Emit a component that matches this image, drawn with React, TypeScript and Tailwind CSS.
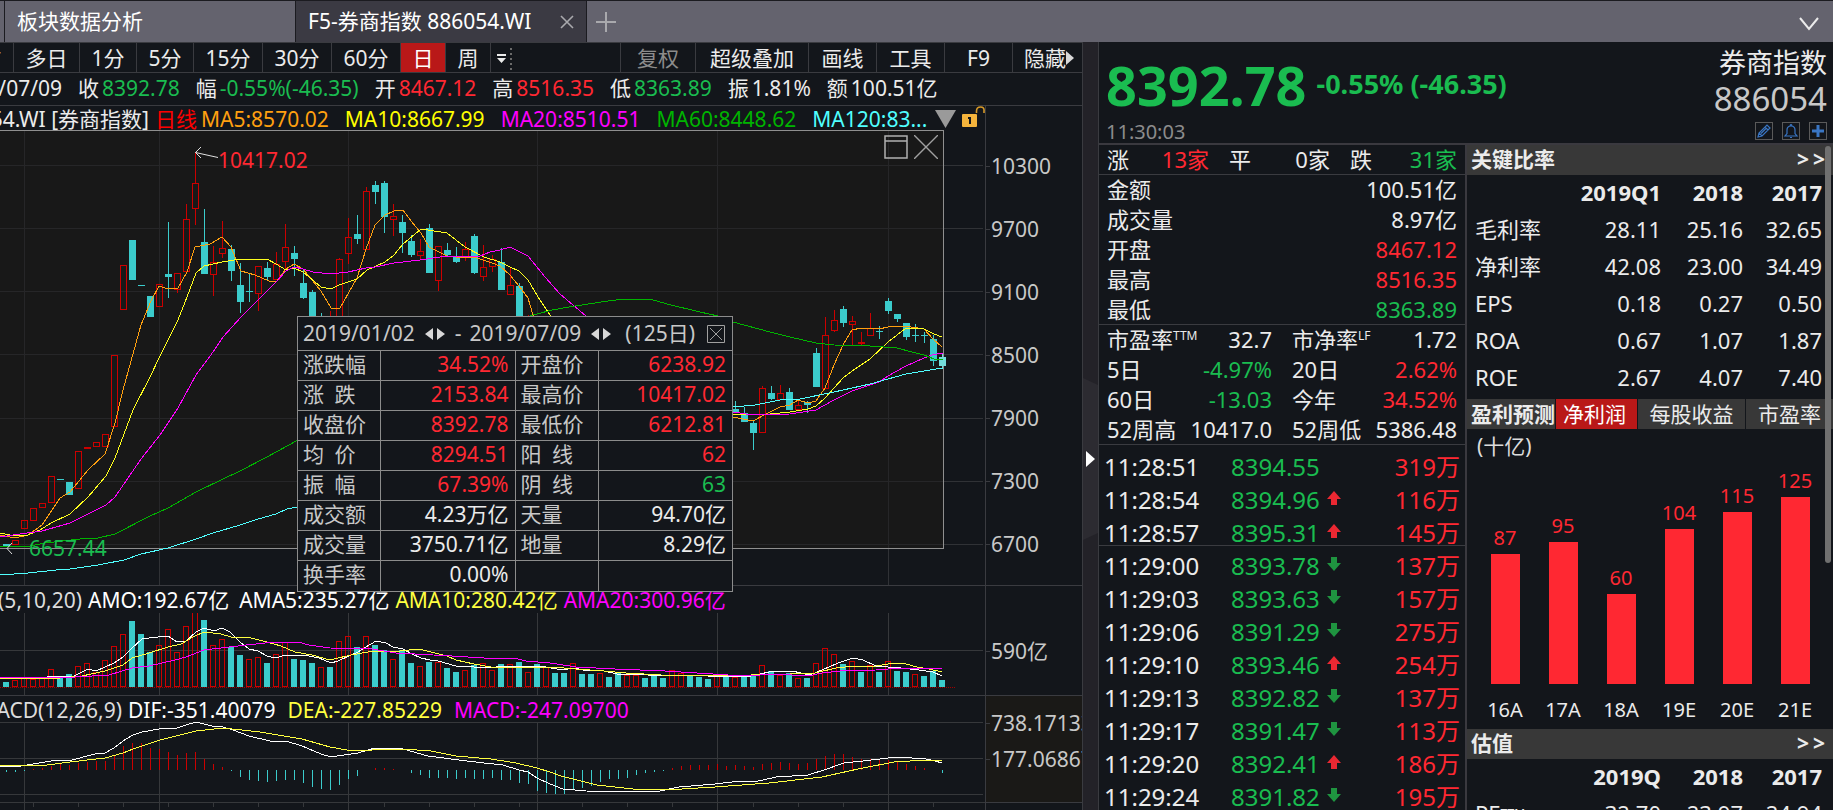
import { useState } from "react";
import type { ReactNode } from "react";

// color tokens
const UP = "#cc0000";
const DOWN = "#3bcccc";

type Candle = [i: number, up: 0 | 1, high: number, top: number, bottom: number, low: number];

const STEP = 9;
const cx = (i: number) => 6.5 + i * STEP;

const CANDLES: Candle[] = [
  [0, 0, 414, 414, 417, 417], [1, 1, 410, 410, 414, 414], [2, 1, 390, 390, 398, 398],
  [3, 1, 378, 378, 390, 390], [4, 1, 373, 373, 377, 377], [5, 1, 346, 346, 372, 372],
  [6, 0, 349, 349, 350, 350], [7, 0, 352, 352, 365, 365], [8, 1, 321, 321, 358, 358],
  [9, 1, 317, 317, 318, 318], [10, 1, 312, 312, 316, 316], [11, 1, 304, 304, 316, 316],
  [12, 1, 225, 225, 296, 296], [13, 1, 135, 135, 179, 179], [14, 0, 110, 110, 150, 150],
  [15, 0, 155, 155, 156, 156], [16, 0, 166, 166, 187, 187], [17, 1, 154, 154, 176, 176],
  [18, 0, 92, 144, 147, 168], [19, 1, 143, 143, 159, 163], [20, 1, 74, 89, 141, 142],
  [21, 1, 22, 53, 78, 95], [22, 0, 79, 112, 144, 144], [23, 1, 116, 132, 144, 166],
  [24, 1, 91, 118, 123, 128], [25, 0, 115, 119, 141, 151], [26, 0, 133, 155, 172, 183],
  [27, 0, 144, 161, 162, 172], [28, 1, 136, 136, 163, 181], [29, 0, 132, 138, 147, 151],
  [30, 1, 122, 134, 149, 150], [31, 1, 94, 117, 131, 140], [32, 0, 116, 123, 129, 146],
  [33, 0, 139, 153, 168, 169], [34, 0, 160, 162, 210, 210], [35, 0, 183, 190, 210, 214],
  [36, 1, 181, 188, 210, 212], [37, 1, 128, 129, 205, 210], [38, 1, 88, 107, 123, 134],
  [39, 0, 85, 104, 109, 114], [40, 1, 57, 61, 119, 120], [41, 0, 51, 55, 62, 74],
  [42, 0, 51, 53, 87, 103], [43, 1, 74, 86, 89, 106], [44, 0, 85, 92, 103, 123],
  [45, 0, 105, 111, 125, 127], [46, 1, 109, 121, 125, 129], [47, 0, 94, 98, 143, 143],
  [48, 1, 116, 116, 150, 161], [49, 0, 113, 120, 125, 127], [50, 0, 117, 127, 132, 133],
  [51, 1, 112, 119, 126, 131], [52, 0, 104, 106, 143, 144], [53, 1, 115, 137, 146, 151],
  [54, 1, 125, 129, 136, 142], [55, 0, 118, 132, 160, 160], [56, 1, 137, 155, 164, 165],
  [57, 0, 153, 156, 200, 205], [58, 1, 185, 190, 210, 214],
  [81, 0, 271, 279, 282, 283], [82, 0, 277, 283, 292, 292], [83, 0, 290, 293, 303, 320],
  [84, 1, 256, 258, 302, 302], [85, 0, 256, 263, 269, 270], [86, 1, 255, 263, 269, 269],
  [87, 0, 258, 262, 280, 280], [88, 1, 269, 275, 279, 280], [89, 0, 271, 272, 275, 283],
  [90, 0, 218, 223, 257, 257], [91, 1, 187, 205, 258, 258], [92, 1, 180, 190, 200, 202],
  [93, 0, 176, 179, 193, 197], [94, 1, 186, 191, 194, 215], [95, 1, 202, 212, 213, 215],
  [96, 1, 183, 198, 205, 206], [97, 0, 196, 201, 202, 209], [98, 0, 168, 171, 181, 184],
  [99, 0, 184, 184, 189, 192], [100, 0, 193, 193, 207, 210], [101, 0, 194, 205, 206, 212],
  [102, 0, 202, 205, 206, 213], [103, 0, 205, 209, 231, 236], [104, 0, 223, 227, 236, 239],
];

// moving averages, split where the range box hides them
const MA_LINES: { color: string; points: string[] }[] = [
  {
    color: "#ffa010",
    points: [
      "0,405 15,408 28,405 42,395 60,368 70,362 88,340 105,324 115,293 123,260 141,195 151,171 159,156 168,159 178,158 187,142 195,117 210,114 222,107 231,117 241,141 255,145 269,151 277,151 286,139 294,134 303,139 321,161 331,178 340,178 357,148 366,119 375,95 385,85 394,81 403,80 411,91 421,103 429,117 447,126 456,127 474,127 492,133 500,136 510,145 519,156 528,168 533,185 536,200",
      "733,287 753,291 768,283 780,277 790,275 798,270 808,273 816,271 825,258 834,235 843,215 852,200 861,198 870,198 879,199 888,197 905,196 924,199 933,209 942,217",
    ],
  },
  {
    color: "#ffff1e",
    points: [
      "0,403 15,406 28,405 40,400 51,393 70,384 88,367 106,346 115,328 133,280 150,247 160,226 178,190 187,167 196,143 204,136 222,132 240,129 267,129 276,134 286,140 294,138 303,142 321,157 331,159 339,155 357,149 367,140 385,132 394,125 403,114 421,99 447,103 465,117 484,127 500,132 510,137 519,141 528,150 540,170 552,188 560,200",
      "733,284 760,285 790,282 808,279 816,276 825,268 843,248 852,241 870,229 888,212 906,198 924,199 934,204 942,207",
    ],
  },
  {
    color: "#ff00ff",
    points: [
      "0,407 20,404 42,401 70,393 88,384 106,375 115,367 141,329 160,305 178,278 196,245 213,222 223,207 241,187 258,170 276,152 286,141 294,137 303,139 313,142 331,144 348,142 366,138 375,137 394,133 420,130 447,126 480,126 490,122 500,120 510,117 528,126 545,147 560,164 586,186 600,200",
      "733,282 753,285 790,284 816,280 834,270 852,261 879,252 888,246 906,236 924,228 932,225 943,223",
    ],
  },
  {
    color: "#00b400",
    points: [
      "0,417 30,416 45,413 80,409 98,408 115,404 150,386 168,378 196,362 223,349 240,341 267,327 298,310",
      "526,187 552,180 575,176 608,171 625,169 650,169 667,174 700,182 718,186 733,192 770,202 790,207 816,213 834,215 870,216 897,218 912,222 924,225 934,229 943,230",
    ],
  },
  {
    color: "#50ffff",
    points: [
      "0,445 28,443 56,440 70,439 98,435 124,430 141,424 168,418 196,409 213,403 240,395 258,389 276,384 287,379 298,377",
      "733,277 755,275 780,270 800,269 834,262 870,254 906,244 930,240 943,238",
    ],
  },
];

const VOLUMES = [
  5, 7, 9, 8, 9, 18, 11, 13, 21, 24, 15, 27, 41, 53, 66, 53, 35, 42, 58, 35, 61, 75, 67, 42, 48, 40,
  32, 28, 30, 24, 33, 45, 28, 27, 24, 20, 20, 46, 51, 40, 51, 42, 37, 28, 37, 24, 21, 25, 25, 19, 15,
  17, 22, 24, 17, 23, 23, 25, 15, 23, 20, 14, 14, 24, 13, 13, 14, 10, 15, 12, 12, 9, 11, 9, 17, 14,
  12, 10, 8, 11, 10, 10, 10, 11, 22, 16, 12, 14, 9, 9, 24, 39, 33, 23, 26, 15, 22, 15, 26, 16, 15,
  13, 11, 16, 7,
];
// u = rising day, d = falling day, ten days per group
const VOLUME_DIR = [
  "duuuuudduu",
  "uuuuddduuu",
  "uuduudduud",
  "uuddduduud",
  "udduddudud",
  "duduududud",
  "uddudduddu",
  "uddduudddu",
  "duddududud",
  "uuududud" + "ud",
  "duddd",
].join("");

const VOLUME_LINES = [
  {
    color: "#ffffff",
    points:
      "0,66 44,65 51,63 74,63 88,56 96,58 105,54 114,50 123,44 132,35 142,26 149,25 168,23 177,29 186,28 196,19 204,15 214,18 222,15 230,19 240,29 249,36 258,38 267,43 275,45 286,42 309,43 319,45 331,50 338,48 351,42 358,39 366,34 376,28 386,30 393,34 403,36 412,41 421,45 430,47 438,48 456,53 491,55 502,53 540,53 563,57 574,55 583,57 604,58 617,61 636,61 660,63 681,62 708,63 751,63 769,59 792,58 810,62 822,57 838,50 853,45 863,47 876,53 888,54 901,55 919,57 933,59 942,63",
  },
  {
    color: "#ffff40",
    points:
      "0,65 49,66 82,63 105,58 123,52 132,45 149,40 168,34 181,31 193,24 204,19 221,21 231,24 247,24 267,29 281,33 295,39 312,42 330,47 351,42 368,39 400,38 419,36 435,40 447,43 456,47 474,51 491,54 551,54 576,56 604,58 626,60 661,62 708,63 751,62 790,61 815,60 836,55 854,53 876,53 894,50 906,51 917,54 929,56 942,59",
  },
  {
    color: "#ff00ff",
    points:
      "0,64 75,64 109,62 132,55 149,53 175,47 186,44 204,37 221,35 246,32 275,29 298,29 309,32 330,35 372,36 396,40 452,43 484,45 514,45 526,48 550,50 576,54 615,56 665,58 697,60 744,63 776,61 808,63 822,60 840,58 876,57 901,55 929,55 942,56",
  },
];

const MACD = [
  -2, -2, -1, 1, 2, 4, 6, 5, 7, 8, 9, 9, 15, 24, 27, 27, 22, 21, 18, 15, 17, 18, 11, 6, 3, -1, -7,
  -10, -11, -12, -11, -10, -10, -13, -17, -19, -20, -15, -9, -6, 0, 2, 2, 1, 0, -3, -5, -8, -8, -8,
  -9, -8, -9, -9, -8, -10, -10, -13, -14, -21, -23, -24, -24, -19, -18, -16, -12, -9, -9, -8, -5, -3,
  -2, -1, 2, 4, 5, 5, 5, 6, 4, 5, 4, 3, 6, 7, 8, 7, 6, 7, 11, 14, 16, 16, 13, 11, 11, 10, 10, 8, 6,
  4, 2, 0, -3,
];

const MACD_LINES = [
  {
    color: "#ffffff",
    points:
      "0,44 21,44 39,41 51,39 72,38 95,32 105,31 114,26 123,19 133,13 142,10 165,6 177,6 186,3 196,0 212,4 223,5 233,8 249,14 270,19 286,19 302,24 321,32 331,35 344,33 358,31 375,26 403,27 428,34 459,38 484,41 503,43 519,48 528,50 537,56 550,62 563,67 586,69 633,70 660,69 679,65 715,62 740,59 754,60 776,55 808,53 824,48 844,41 863,39 897,35 926,37 935,39 942,41",
  },
  {
    color: "#ffff40",
    points:
      "0,43 47,43 70,40 105,36 123,31 133,27 160,18 196,9 223,6 260,10 302,17 330,25 347,28 372,28 403,27 431,29 456,34 491,37 516,41 537,46 550,50 561,54 597,63 633,67 665,68 715,65 769,61 822,55 858,47 894,40 926,38 942,39",
  },
];

const MONTHS = [24.5, 159.5, 348.5, 537.5, 717.5, 888.5];
const WEEKS = [
  33.5, 78.5, 123.5, 168.5, 213.5, 258.5, 303.5, 384.5, 429.5, 474.5, 519.5, 582.5, 627.5, 672.5,
  753.5, 798.5, 843.5, 933.5,
];
const PRICES = [10300, 9700, 9100, 8500, 7900, 7300, 6700];
const PRICE_Y = [35.5, 98.5, 161.5, 224.5, 288.5, 351.5, 414.5];

const RED = "text-[#ff2832]";
const GREEN = "text-[#1abc50]";
const WHITE = "text-[#ebebeb]";

function TabBar() {
  return (
    <header className="flex h-[42px] shrink-0 items-stretch border-t border-[#1b1b20] bg-[#64636e] text-[21px] text-white">
      <button className="ml-1 w-[292px] border-x border-[#1b1b20] px-3 text-left">板块数据分析</button>
      <div className="flex w-[291px] items-center justify-between border-r border-[#1b1b20] bg-[#3b3a43] pr-3 pl-3">
        <button>F5-券商指数 886054.WI</button>
        <button aria-label="关闭" className="text-[#a9a9ad]">
          <svg width="14" height="14" viewBox="0 0 14 14" stroke="currentColor" strokeWidth="1.6">
            <path d="M1 1L13 13M13 1L1 13" />
          </svg>
        </button>
      </div>
      <button aria-label="新建" className="ml-2 text-[#a9a9ad]">
        <svg width="22" height="22" viewBox="0 0 22 22" stroke="currentColor" strokeWidth="2">
          <path d="M11 1V21M1 11H21" />
        </svg>
      </button>
      <button aria-label="更多" className="mt-1 mr-3.5 ml-auto text-[#ebebeb]">
        <svg width="20" height="14" viewBox="0 0 20 14" fill="none" stroke="currentColor" strokeWidth="2">
          <path d="M1 1L10 12L19 1" />
        </svg>
      </button>
    </header>
  );
}

const PERIODS = [
  ["多日", "w-[66px]"],
  ["1分", "w-[57px]"],
  ["5分", "w-[57px]"],
  ["15分", "w-[69px]"],
  ["30分", "w-[69px]"],
  ["60分", "w-[69px]"],
  ["日", "w-[45px]"],
  ["周", "w-[45px]"],
];

function Toolbar() {
  const [period, setPeriod] = useState("日");
  return (
    <nav className="flex h-[31px] shrink-0 overflow-hidden border-y border-[#3a3b40] text-[21px] leading-[28px] text-[#ebebeb]">
      <button className="flex w-[14px] shrink-0 justify-end overflow-hidden border-r border-[#3a3b40] pr-3 whitespace-nowrap">
        分时
      </button>
      {PERIODS.map(([p, w]) => (
        <button
          key={p}
          onClick={() => setPeriod(p)}
          className={`${w} shrink-0 border-r border-[#3a3b40] ${p === period ? "bg-[#b91818] text-white" : ""}`}
        >
          {p}
        </button>
      ))}
      <button aria-label="更多周期" className="ml-1.5 flex items-center">
        <svg width="18" height="24" viewBox="0 0 18 24" fill="#ebebeb">
          <path d="M0 8H9V10H0ZM0 12H9L4.5 17Z" />
          <path d="M14 2V24" stroke="#6b6b6b" strokeWidth="2" strokeDasharray="2 3" />
        </svg>
      </button>
      <div className="ml-auto flex shrink-0 [&>button]:border-l [&>button]:border-[#3a3b40]">
        <button className="w-[75px] text-[#8c8c8c]">复权</button>
        <button className="w-[113px]">超级叠加</button>
        <button className="w-[68px]">画线</button>
        <button className="w-[68px]">工具</button>
        <button className="w-[68px]">F9</button>
        <button className="flex w-[70px] items-center pl-[11px] whitespace-nowrap">
          隐藏
          <svg className="shrink-0" width="8" height="14" viewBox="0 0 8 14" fill="#d8d8d8">
            <path d="M0 0L8 7L0 14Z" />
          </svg>
        </button>
      </div>
    </nav>
  );
}

function SummaryBar() {
  const items = [
    ["收", "8392.78", GREEN],
    ["幅", "-0.55%(-46.35)", GREEN],
    ["开", "8467.12", RED],
    ["高", "8516.35", RED],
    ["低", "8363.89", GREEN],
    ["振", "1.81%", WHITE],
    ["额", "100.51亿", WHITE],
  ];
  return (
    <div className="flex h-[33px] shrink-0 gap-4 overflow-hidden border-b border-[#3a3b40] text-[21px] leading-[30px] whitespace-nowrap text-[#ebebeb]">
      <span className="flex w-[62px] shrink-0 justify-end overflow-hidden">2019/07/09</span>
      {items.map(([k, v, c]) => (
        <span key={k} className="flex gap-[3px]">
          {k}
          <span className={c}>{v}</span>
        </span>
      ))}
    </div>
  );
}

function Bars() {
  return (
    <g shapeRendering="crispEdges">
      {CANDLES.map(([i, up, high, top, bottom, low]) => {
        const x = cx(i);
        if (up) {
          return (
            <g key={i} stroke={UP} fill="none">
              <path d={`M${x} ${high}V${top}M${x} ${bottom}V${low}`} />
              <rect x={x - 3} y={top + 0.5} width={6} height={bottom - top} />
            </g>
          );
        }
        const color = i === 104 ? "#74dcdc" : DOWN;
        return (
          <g key={i} stroke={color} fill={color}>
            <path d={`M${x} ${high}V${low}`} />
            <rect x={x - 3.5} y={top} width={7} height={bottom - top} stroke="none" />
          </g>
        );
      })}
    </g>
  );
}

function PriceChart() {
  return (
    <svg className="block h-[455px] w-full" viewBox="0 0 985 455" preserveAspectRatio="none">
      <g stroke="#303236" shapeRendering="crispEdges">
        {MONTHS.map((x) => (
          <path key={x} d={`M${x} 0V455`} />
        ))}
        {PRICE_Y.map((y) => (
          <path key={y} d={`M944 ${y}H983`} />
        ))}
      </g>
      <rect x="-2" y="0.5" width="945.5" height="418" fill="#181818" stroke="#8f8f8f" shapeRendering="crispEdges" />
      <g stroke="#262628" shapeRendering="crispEdges">
        {MONTHS.map((x) => (
          <path key={x} d={`M${x} 1V418`} />
        ))}
        {PRICE_Y.map((y) => (
          <path key={y} d={`M0 ${y}H943`} />
        ))}
      </g>
      <Bars />
      {MA_LINES.map((l) =>
        l.points.map((p) => (
          <polyline key={p} points={p} fill="none" stroke={l.color} shapeRendering="crispEdges" />
        )),
      )}
      <g stroke="#e0e0e0" fill="none">
        <path d="M218 27.500L195.500 22.500M201 17L195.500 22.500L201 28" />
        <path d="M12 413L7 418.500L12 424" />
      </g>
    </svg>
  );
}

function VolumeChart() {
  return (
    <svg className="block h-[82px] w-full" viewBox="0 0 985 82" preserveAspectRatio="none">
      <g stroke="#36383b" shapeRendering="crispEdges">
        {MONTHS.map((x) => (
          <path key={x} d={`M${x} 0V82`} />
        ))}
        <path d="M0 37.500H983" />
      </g>
      <path d="M0 74.500H955" stroke="#a00000" strokeDasharray="1 1" shapeRendering="crispEdges" />
      <g shapeRendering="crispEdges">
        {VOLUMES.map((h, i) =>
          VOLUME_DIR[i] === "u" ? (
            <rect key={i} x={cx(i) - 3} y={74.5 - h} width={5} height={h - 1} fill="none" stroke={UP} />
          ) : (
            <rect key={i} x={cx(i) - 3.5} y={74 - h} width={6} height={h} fill={DOWN} />
          ),
        )}
      </g>
      {VOLUME_LINES.map((l) => (
        <polyline key={l.color} points={l.points} fill="none" stroke={l.color} shapeRendering="crispEdges" />
      ))}
    </svg>
  );
}

function MacdChart() {
  return (
    <svg className="block h-[88px] w-full" viewBox="0 0 985 88" preserveAspectRatio="none">
      <g stroke="#36383b" shapeRendering="crispEdges">
        {MONTHS.map((x) => (
          <path key={x} d={`M${x} 0V88`} />
        ))}
        <path d="M0 0.500H983M0 36.500H983M0 72.500H983M0 80.500H985" />
        {WEEKS.map((x) => (
          <path key={x} d={`M${x} 81V85`} />
        ))}
      </g>
      <g shapeRendering="crispEdges">
        {MACD.map((v, i) => (
          <path key={i} d={`M${cx(i)} 48V${48 - v}`} stroke={v > 0 ? UP : DOWN} />
        ))}
      </g>
      {MACD_LINES.map((l) => (
        <polyline key={l.color} points={l.points} fill="none" stroke={l.color} shapeRendering="crispEdges" />
      ))}
    </svg>
  );
}

function Stepper() {
  return (
    <button aria-label="调整日期" className="mx-2.5 flex items-center">
      <svg width="20" height="12" viewBox="0 0 20 12" fill="#d8d8d8">
        <path d="M8 0V12L0 6ZM12 0V12L20 6Z" />
      </svg>
    </button>
  );
}

const RANGE_ROWS = [
  ["涨跌幅", "34.52%", RED, "开盘价", "6238.92", RED],
  ["涨\u2002跌", "2153.84", RED, "最高价", "10417.02", RED],
  ["收盘价", "8392.78", RED, "最低价", "6212.81", RED],
  ["均\u2002价", "8294.51", RED, "阳\u2002线", "62", RED],
  ["振\u2002幅", "67.39%", RED, "阴\u2002线", "63", GREEN],
  ["成交额", "4.23万亿", WHITE, "天量", "94.70亿", WHITE],
  ["成交量", "3750.71亿", WHITE, "地量", "8.29亿", WHITE],
  ["换手率", "0.00%", WHITE, "", "", WHITE],
];

// Range statistics, floats over the price pane
function RangeBox() {
  return (
    <div className="absolute top-[210px] left-[297px] w-[436px] border border-[#8c8c8c] bg-[#13161b] text-[21px] text-[#c8c8c8]">
      <div className="flex h-[33px] items-center pr-[7px] pl-[5px] leading-[33px] whitespace-nowrap">
        <span>2019/01/02</span>
        <Stepper />
        <span>-</span>
        <span className="ml-2">2019/07/09</span>
        <Stepper />
        <span className="ml-auto">(125日)</span>
        <button aria-label="关闭" className="ml-3">
          <svg width="18" height="18" viewBox="0 0 18 18" fill="none" stroke="#a0a0a0">
            <path d="M0.500 0.500H17.500V17.500H0.500ZM3 3L15 15M15 3L3 15" />
          </svg>
        </button>
      </div>
      <table className="w-full table-fixed border-collapse">
        <colgroup>
          <col className="w-[82px]" />
          <col className="w-[135px]" />
          <col className="w-[83px]" />
          <col />
        </colgroup>
        <tbody>
          {RANGE_ROWS.map(([k1, v1, c1, k2, v2, c2]) => (
            <tr key={k1} className="border-t border-[#8c8c8c] align-top leading-[27px] whitespace-nowrap">
              <th className="h-[30px] p-0 pl-[5px] text-left font-normal whitespace-pre">{k1}</th>
              <td className={`border-l border-[#8c8c8c] p-0 pr-[6px] text-right ${c1}`}>{v1}</td>
              <th className="border-l border-[#8c8c8c] p-0 pl-[5px] text-left font-normal whitespace-pre">{k2}</th>
              <td className={`border-l border-[#8c8c8c] p-0 pr-[6px] text-right ${c2}`}>{v2}</td>
            </tr>
          ))}
        </tbody>
      </table>
    </div>
  );
}

function Pane({ head, chart, axis, axisClass = "" }: { head: ReactNode; chart: ReactNode; axis: ReactNode; axisClass?: string }) {
  return (
    <div className="flex shrink-0 text-[21px] whitespace-nowrap">
      <div className="min-w-0 flex-1 overflow-hidden">
        {head}
        {chart}
      </div>
      <div className={`w-[97px] shrink-0 overflow-hidden border-l border-[#3a3b40] text-[#c8c8c8] ${axisClass}`}>{axis}</div>
    </div>
  );
}

function Tick({ children }: { children: ReactNode }) {
  return (
    <div className="flex items-center gap-px before:h-px before:w-1 before:shrink-0 before:bg-[#3a3b40]">
      {children}
    </div>
  );
}

function ChartArea() {
  return (
    <div className="relative flex-1">
      <Pane
        head={
          <div className="flex h-6 items-end leading-[22px]">
            <span className="flex w-[149px] shrink-0 justify-end overflow-hidden text-[#ebebeb]">886054.WI [券商指数]</span>
            <span className="ml-1.5 text-[#ff0000]">日线</span>
            <span className="ml-1 text-[#ffa010]">MA5:8570.02</span>
            <span className="ml-4 text-[#ffff00]">MA10:8667.99</span>
            <span className="ml-4 text-[#ff00ff]">MA20:8510.51</span>
            <span className="ml-4 text-[#00b400]">MA60:8448.62</span>
            <span className="ml-4 text-[#50ffff]">MA120:83...</span>
            <button aria-label="展开" className="mb-0.5 ml-auto">
              <svg width="21" height="18" viewBox="0 0 21 18" fill="#9a9a9a">
                <path d="M0 0H21L10.500 18Z" />
              </svg>
            </button>
            <button aria-label="锁定" className="mb-0.5 ml-1.5">
              <svg width="23" height="22" viewBox="0 0 23 22" fill="none">
                <rect x="0" y="8" width="15" height="13" rx="1" fill="#f5b43c" />
                <path d="M6 11H9V18H7V13H6Z" fill="#13161b" />
                <path d="M14.500 7V5Q14.500 1 18.500 1T22 5V7" stroke="#d89a28" strokeWidth="1.6" />
              </svg>
            </button>
          </div>
        }
        chart={<PriceChart />}
        axis={
          <div className="pt-[29px]">
            {PRICES.map((p) => (
              <div key={p} className="leading-[63px]">
                <Tick>{p}</Tick>
              </div>
            ))}
          </div>
        }
      />
      <div className="border-t border-[#3a3b40]">
        <Pane
          head={
            <div className="flex h-[27px] items-end leading-[25px] text-white">
              <span className="flex w-[82px] shrink-0 justify-end overflow-hidden text-[#dcdcdc]">AMO(5,10,20)</span>
              <span className="ml-1.5">AMO:192.67亿</span>
              <span className="ml-2.5">AMA5:235.27亿</span>
              <span className="ml-1.5 text-[#ffff40]">AMA10:280.42亿</span>
              <span className="ml-1.5 text-[#ff00ff]">AMA20:300.96亿</span>
            </div>
          }
          chart={<VolumeChart />}
          axis={
            <div className="pt-12 leading-[34px]">
              <Tick>590亿</Tick>
            </div>
          }
        />
      </div>
      <div className="border-t border-[#3a3b40]">
        <Pane
          head={
            <div className="flex h-[26px] items-end leading-[24px] text-white">
              <span className="flex w-[122px] shrink-0 justify-end overflow-hidden text-[#dcdcdc]">MACD(12,26,9)</span>
              <span className="ml-1.5">DIF:-351.40079</span>
              <span className="ml-3 text-[#ffff40]">DEA:-227.85229</span>
              <span className="ml-3 text-[#ff00ff]">MACD:-247.09700</span>
            </div>
          }
          chart={<MacdChart />}
          axisClass="bg-[#1a1917]"
          axis={
            <div className="pt-[9px] leading-9">
              <Tick>738.17133</Tick>
              <Tick>177.06867</Tick>
              <div className="mt-[25px] h-2 border-t border-[#3a3b40] bg-[#13161b]" />
            </div>
          }
        />
      </div>
      <span className={`absolute top-[39px] left-[218px] text-[21px] leading-[30px] ${RED}`}>10417.02</span>
      <span className={`absolute top-[427px] left-[29px] text-[21px] leading-[30px] ${GREEN}`}>6657.44</span>
      <div className="absolute top-[29px] right-[144px] flex gap-1.5">
        <button aria-label="最大化">
          <svg width="24" height="24" viewBox="0 0 24 24" fill="none" stroke="#b0b0b0" strokeWidth="1.5">
            <path d="M1 1H23V23H1ZM1 6H23" />
          </svg>
        </button>
        <button aria-label="关闭区间">
          <svg width="24" height="24" viewBox="0 0 24 24" fill="none" stroke="#a0a0a0" strokeWidth="1.4">
            <path d="M0 0L24 24M24 0L0 24" />
          </svg>
        </button>
      </div>
      <RangeBox />
    </div>
  );
}

function Collapser() {
  return (
    <button aria-label="收起" className="flex w-[15px] shrink-0 flex-col bg-[#232228] pt-[336px]">
      <svg width="15" height="162" viewBox="0 0 15 162">
        <path d="M0 0L15 7V155L0 162Z" fill="#2c2b31" />
        <path d="M3 73V89L12 81Z" fill="#fff" />
      </svg>
    </button>
  );
}

function QuoteHeader() {
  return (
    <div className="flex h-[103px] shrink-0 justify-between border-b-2 border-[#3a393f] pr-1.5 pl-[7px] whitespace-nowrap">
      <div className="pt-[7px]">
        <div className={`flex gap-2.5 font-bold ${GREEN}`}>
          <span className="text-[54px] leading-[72px]">8392.78</span>
          <span className="text-[27px] leading-[70px]">-0.55% (-46.35)</span>
        </div>
        <div className="pt-px text-[20px] leading-5 text-[#8c8c8c]">11:30:03</div>
      </div>
      <div className="text-right">
        <div className="pt-1 text-[27px] leading-[34px] text-[#ebebeb]">券商指数</div>
        <div className="text-[33px] leading-[38px] text-[#c8c8c8]">886054</div>
        <div className="mt-1 flex justify-end gap-[9px] [&>button]:border [&>button]:border-[#5a5a5a]">
          <button aria-label="编辑">
            <svg width="16" height="16" viewBox="0 0 16 16" fill="none" stroke="#3a76c4" strokeWidth="1.2">
              <path d="M2 14L3 10L11 2L14 5L6 13ZM9 4L12 7M3 10L6 13M5 10.500L10 5.500" />
            </svg>
          </button>
          <button aria-label="预警">
            <svg width="16" height="16" viewBox="0 0 16 16" fill="none" stroke="#3a76c4" strokeWidth="1.2">
              <path d="M2 13H14L12 10.500V7Q12 3 8 3T4 7V10.500ZM7 2.500Q8 0.500 9 2.500M7 14.500H9" />
            </svg>
          </button>
          <button aria-label="添加">
            <svg width="16" height="16" viewBox="0 0 16 16" stroke="#3a76c4" strokeWidth="3">
              <path d="M8 2V14M2 8H14" />
            </svg>
          </button>
        </div>
      </div>
    </div>
  );
}

function Stat({ k, sup, v, c = "" }: { k: string; sup?: string; v: string; c?: string }) {
  return (
    <div className="flex h-[30px] justify-between leading-[28px]">
      <dt>
        {k}
        {sup && <span className="align-[8px] text-[12px] leading-3">{sup}</span>}
      </dt>
      <dd className={c}>{v}</dd>
    </div>
  );
}

const TICKS: [string, string, number, string][] = [
  ["11:28:51", "8394.55", 0, "319万"],
  ["11:28:54", "8394.96", 1, "116万"],
  ["11:28:57", "8395.31", 1, "145万"],
  ["11:29:00", "8393.78", -1, "137万"],
  ["11:29:03", "8393.63", -1, "157万"],
  ["11:29:06", "8391.29", -1, "275万"],
  ["11:29:10", "8393.46", 1, "254万"],
  ["11:29:13", "8392.82", -1, "137万"],
  ["11:29:17", "8391.47", -1, "113万"],
  ["11:29:20", "8392.41", 1, "186万"],
  ["11:29:24", "8391.82", -1, "195万"],
];

function Arrow({ dir }: { dir: number }) {
  if (!dir) return null;
  return (
    <svg className="mb-1" width="14" height="14" viewBox="0 0 14 14" fill={dir > 0 ? "#eb2832" : "#1f9440"}>
      <path d={dir > 0 ? "M7 0L14 8H10V14H4V8H0Z" : "M7 14L14 6H10V0H4V6H0Z"} />
    </svg>
  );
}

function QuoteColumn() {
  return (
    <div className="min-w-0 flex-1 overflow-hidden border-r-2 border-[#3a393f] text-[22px] whitespace-nowrap text-[#ebebeb]">
      <dl className="grid h-[30px] grid-cols-[101fr_100fr_106fr] gap-5 border-b border-[#3a3b40] px-2">
        <Stat k="涨" v="13家" c={RED} />
        <Stat k="平" v="0家" />
        <Stat k="跌" v="31家" c={GREEN} />
      </dl>
      <dl className="h-[150px] border-b border-[#3a3b40] px-2">
        <Stat k="金额" v="100.51亿" />
        <Stat k="成交量" v="8.97亿" />
        <Stat k="开盘" v="8467.12" c={RED} />
        <Stat k="最高" v="8516.35" c={RED} />
        <Stat k="最低" v="8363.89" c={GREEN} />
      </dl>
      <dl className="grid h-[120px] grid-cols-2 gap-x-5 border-b border-[#3a3b40] px-2">
        <Stat k="市盈率" sup="TTM" v="32.7" />
        <Stat k="市净率" sup="LF" v="1.72" />
        <Stat k="5日" v="-4.97%" c={GREEN} />
        <Stat k="20日" v="2.62%" c={RED} />
        <Stat k="60日" v="-13.03" c={GREEN} />
        <Stat k="今年" v="34.52%" c={RED} />
        <Stat k="52周高" v="10417.0" />
        <Stat k="52周低" v="5386.48" />
      </dl>
      <table className="mt-[5px] w-full text-[24px]">
        <tbody>
          {TICKS.map(([time, price, dir, vol], i) => (
            <tr
              key={time}
              className={`relative leading-[33px] ${i === 2 ? "after:absolute after:inset-x-0 after:bottom-[3px] after:h-px after:bg-[#3a3b40]" : ""}`}
            >
              <td className="w-[132px] p-0 pl-[5px]">{time}</td>
              <td className={`w-[90px] p-0 ${GREEN}`}>{price}</td>
              <td className="p-0 pl-1.5">
                <Arrow dir={dir} />
              </td>
              <td className={`p-0 pr-[5px] text-right ${RED}`}>{vol}</td>
            </tr>
          ))}
        </tbody>
      </table>
    </div>
  );
}

function SectionHead({ title }: { title: string }) {
  return (
    <div className="flex h-[30px] justify-between bg-[#383838] pr-2 pl-1 text-[21px] leading-[29px] font-bold text-[#ebebeb]">
      <h2>{title}</h2>
      <a href="#more" className="flex gap-1">
        <span>&gt;</span>
        <span>&gt;</span>
      </a>
    </div>
  );
}

function RatioTable({ head, rows }: { head: string[]; rows: [ReactNode, string, string, string][] }) {
  return (
    <table className="w-full table-fixed text-right text-[22px] leading-[35px] text-[#ebebeb]">
      <thead>
        <tr className="h-[37px] align-top">
          <td className="w-[101px] p-0" />
          {head.map((h, i) => (
            <th key={h} className={`p-0 text-right font-bold ${i === 0 ? "w-[93px]" : i === 1 ? "w-[82px]" : "pr-[11px]"}`}>
              {h}
            </th>
          ))}
        </tr>
      </thead>
      <tbody>
        {rows.map(([k, a, b, c], i) => (
          <tr key={i} className="h-[37px] align-top">
            <th className="p-0 pl-2 text-left font-normal">{k}</th>
            <td className="p-0">{a}</td>
            <td className="p-0">{b}</td>
            <td className="p-0 pr-[11px]">{c}</td>
          </tr>
        ))}
      </tbody>
    </table>
  );
}

const PROFITS: [string, number][] = [
  ["16A", 87],
  ["17A", 95],
  ["18A", 60],
  ["19E", 104],
  ["20E", 115],
  ["21E", 125],
];

function Forecast() {
  const [tab, setTab] = useState("净利润");
  const tabs = [
    ["净利润", "w-[81px] pr-1"],
    ["每股收益", "w-[107px]"],
    ["市盈率", "flex-1"],
  ];
  return (
    <section>
      <div className="flex h-[30px] gap-px text-[21px] leading-[30px] whitespace-nowrap text-[#ebebeb]">
        <h2 className="w-[88px] shrink-0 bg-[#383838] pl-1 font-bold">盈利预测</h2>
        {tabs.map(([t, w]) => (
          <button key={t} onClick={() => setTab(t)} className={`${w} ${t === tab ? "bg-[#b91818] text-white" : "bg-[#383838]"}`}>
            {t}
          </button>
        ))}
      </div>
      <div className="h-[34px] pt-px pl-2.5 text-[21px] leading-8 text-[#dcdcdc]">(十亿)</div>
      <div className="flex h-[221px] items-end pr-[9px] pl-[9px] text-center text-[20px]">
        {PROFITS.map(([y, v]) => (
          <div key={y} className="flex flex-1 flex-col items-center">
            <span className={`leading-8 ${RED}`}>{v}</span>
            <div className="w-[29px] bg-[#ff2832]" style={{ height: Math.round(v * 1.495) }} />
          </div>
        ))}
      </div>
      <div className="flex h-[45px] px-[9px] pt-[10px] text-center text-[20px] leading-8 text-[#ebebeb]">
        {PROFITS.map(([y]) => (
          <span key={y} className="flex-1">
            {y}
          </span>
        ))}
      </div>
    </section>
  );
}

function FundamentalColumn() {
  return (
    <div className="relative w-[366px] shrink-0 overflow-hidden">
      <section className="pb-0.5">
        <SectionHead title="关键比率" />
        <RatioTable
          head={["2019Q1", "2018", "2017"]}
          rows={[
            ["毛利率", "28.11", "25.16", "32.65"],
            ["净利率", "42.08", "23.00", "34.49"],
            ["EPS", "0.18", "0.27", "0.50"],
            ["ROA", "0.67", "1.07", "1.87"],
            ["ROE", "2.67", "4.07", "7.40"],
          ]}
        />
      </section>
      <Forecast />
      <section>
        <SectionHead title="估值" />
        <RatioTable
          head={["2019Q", "2018", "2017"]}
          rows={[
            [
              <>
                PE<span className="align-[4px] text-[12px] leading-3">TTM</span>
              </>,
              "32.70",
              "23.97",
              "24.94",
            ],
          ]}
        />
      </section>
      <div className="absolute top-px right-[2px] h-[417px] w-1.5 rounded-full bg-[#707070]" />
    </div>
  );
}

export default function App() {
  return (
    <div className="flex h-screen flex-col overflow-hidden bg-[#13161b] font-['Noto_Sans','Noto_Sans_CJK_SC',sans-serif]">
      <TabBar />
      <main className="flex min-h-0 flex-1">
        <section className="flex min-w-0 flex-1 flex-col overflow-hidden border-r border-[#3a3b40]">
          <Toolbar />
          <SummaryBar />
          <ChartArea />
        </section>
        <Collapser />
        <aside className="flex w-[735px] shrink-0 flex-col overflow-hidden border-l border-[#3a3b40]">
          <QuoteHeader />
          <div className="flex min-h-0 flex-1">
            <QuoteColumn />
            <FundamentalColumn />
          </div>
        </aside>
      </main>
    </div>
  );
}
